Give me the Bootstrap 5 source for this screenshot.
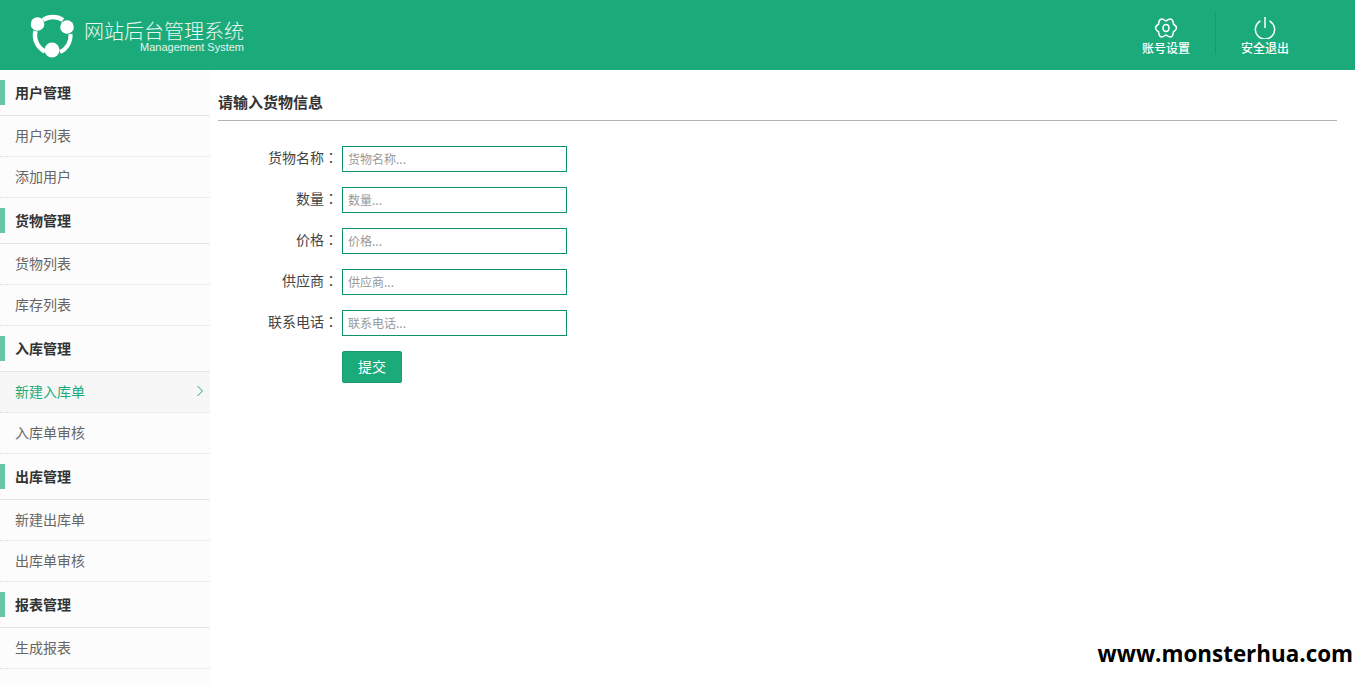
<!DOCTYPE html>
<html lang="zh-CN">
<head>
<meta charset="utf-8">
<title>网站后台管理系统</title>
<link href="https://cdn.jsdelivr.net/npm/bootstrap@5.3.0/dist/css/bootstrap.min.css" rel="stylesheet">
<style>
html,body{height:685px;overflow:hidden}
body{font-family:"Noto Sans CJK SC",sans-serif;font-size:14px;color:#333;background:#fff;position:relative}
.top-bar{height:70px;background:#1bab7a;color:#fff}
.brand-wrap{padding-left:30px}
.brand-text{margin-left:8px;width:160px;padding-top:4px}
.brand-title{font-family:"Liberation Sans","Noto Sans CJK SC",sans-serif;font-size:20px;line-height:22px;color:#e9f7f2;font-weight:300}
.brand-sub{font-family:"Liberation Sans",sans-serif;font-size:11px;line-height:13px;text-align:right;color:#e3f5ef;margin-top:-2px}
.top-right{padding:12px 41px 0 0}
.top-act{width:98px;margin-top:4px;font-size:12px;line-height:16px;font-weight:500;color:#fff}
.act-ico{height:24px}
.top-sep{width:1px;height:42px;background:#179a6d}
.side{width:210px;height:615px;background:#fcfcfc;flex:none;overflow:hidden}
.side-head{height:46px;border-bottom:1px solid #e6e6e6;padding-left:15px;font-weight:700;font-size:14px;color:#333;position:relative;display:flex;align-items:center}
.side-head::before{content:"";position:absolute;left:0;top:10px;width:5px;height:25px;background:#66c5a4}
.side-link{height:41px;border-bottom:1px dotted #ddd;padding:0 0 2px 15px;font-size:14px;color:#666;display:flex;align-items:center;justify-content:space-between;text-decoration:none}
.side-link.on{color:#1bab7a;background:#f7f7f7;padding-right:6px}
.main-area{padding:18px 18px 0 8px}
.page-ttl{font-size:15px;font-weight:700;color:#333;height:33px;line-height:28px;border-bottom:1px solid #b3b3b3;margin-bottom:25px}
.form-line{height:26px;margin-bottom:15px}
.form-lbl{width:124px;text-align:right;font-size:14px;color:#444;line-height:22px;padding:0 4px 4px 0}
.lbl-colon{display:inline-block;width:14px;text-align:center;font-family:"Noto Sans CJK TC",sans-serif}
.form-inp{width:225px;height:26px;border:1px solid #0e9268;border-radius:0;padding:0 5px 2px;font-size:12px;color:#333;background:#fff;outline:0}
.form-inp::placeholder{color:#999;opacity:1}
.btn-send{width:60px;height:32px;margin-left:124px;background:#1bab7a;border:1px solid #189b6e;border-radius:2px;color:#fff;font-size:14px;padding:0 0 2px;line-height:28px}
.mark-web{position:absolute;right:2px;bottom:15px;font-family:"Open Sans",sans-serif;font-weight:700;font-size:22.4px;line-height:32px;color:#000}
</style>
</head>
<body>
<header class="top-bar d-flex align-items-center justify-content-between">
  <div class="brand-wrap d-flex align-items-center">
    <svg width="46" height="46" viewBox="0 0 46 46" aria-hidden="true">
      <path d="M5.500 19A18 18 0 0 0 15 39.500" fill="none" stroke="#fff" stroke-width="4.500"/>
      <path d="M13 8A18 18 0 0 1 33 8" fill="none" stroke="#fff" stroke-width="4.500"/>
      <path d="M40.500 22A18 18 0 0 1 30 40" fill="none" stroke="#fff" stroke-width="4"/>
      <circle cx="7.500" cy="12" r="6.800" fill="#fff"/>
      <circle cx="37" cy="15" r="6.800" fill="#fff"/>
      <circle cx="22" cy="38" r="7.500" fill="#fff"/>
    </svg>
    <div class="brand-text">
      <div class="brand-title text-nowrap">网站后台管理系统</div>
      <div class="brand-sub">Management System</div>
    </div>
  </div>
  <div class="top-right d-flex align-self-start">
    <div class="top-act d-flex flex-column align-items-center">
      <div class="act-ico d-flex align-items-center">
        <svg width="24" height="20" viewBox="0 0 24 20" fill="none" stroke="#fff" stroke-width="1.500" aria-hidden="true">
          <path d="M12 3Q18.750-2 19.400 6Q25.500 10 19.400 14Q18.750 22 12 17Q5.250 22 4.600 14Q-1.500 10 4.600 6Q5.250-2 12 3Z"/>
          <ellipse cx="12" cy="10" rx="3" ry="3.400"/>
        </svg>
      </div>
      账号设置
    </div>
    <div class="top-sep"></div>
    <div class="top-act d-flex flex-column align-items-center">
      <div class="act-ico d-flex align-items-center">
        <svg width="22" height="22" viewBox="0 0 22 22" fill="none" stroke="#fff" stroke-width="1.500" aria-hidden="true">
          <path d="M6.500 4A9.600 9.600 0 1 0 15.500 4"/><path d="M11 0v11"/>
        </svg>
      </div>
      安全退出
    </div>
  </div>
</header>
<div class="d-flex">
  <nav class="side">
    <div class="side-head">用户管理</div>
    <a class="side-link" href="#">用户列表</a>
    <a class="side-link" href="#">添加用户</a>
    <div class="side-head">货物管理</div>
    <a class="side-link" href="#">货物列表</a>
    <a class="side-link" href="#">库存列表</a>
    <div class="side-head">入库管理</div>
    <a class="side-link on" href="#">新建入库单
      <svg width="8" height="12" viewBox="0 0 8 12" fill="none" stroke="#1bab7a" stroke-width="1" aria-hidden="true"><path d="M1.500 1l5 5-5 5"/></svg>
    </a>
    <a class="side-link" href="#">入库单审核</a>
    <div class="side-head">出库管理</div>
    <a class="side-link" href="#">新建出库单</a>
    <a class="side-link" href="#">出库单审核</a>
    <div class="side-head">报表管理</div>
    <a class="side-link" href="#">生成报表</a>
  </nav>
  <main class="main-area flex-grow-1">
    <div class="page-ttl">请输入货物信息</div>
    <form>
      <div class="form-line d-flex align-items-center"><label class="form-lbl">货物名称<span class="lbl-colon">：</span></label><input class="form-inp" placeholder="货物名称..."></div>
      <div class="form-line d-flex align-items-center"><label class="form-lbl">数量<span class="lbl-colon">：</span></label><input class="form-inp" placeholder="数量..."></div>
      <div class="form-line d-flex align-items-center"><label class="form-lbl">价格<span class="lbl-colon">：</span></label><input class="form-inp" placeholder="价格..."></div>
      <div class="form-line d-flex align-items-center"><label class="form-lbl">供应商<span class="lbl-colon">：</span></label><input class="form-inp" placeholder="供应商..."></div>
      <div class="form-line d-flex align-items-center"><label class="form-lbl">联系电话<span class="lbl-colon">：</span></label><input class="form-inp" placeholder="联系电话..."></div>
      <button type="button" class="btn btn-send">提交</button>
    </form>
  </main>
</div>
<div class="mark-web">www.monsterhua.com</div>
<script src="https://cdn.jsdelivr.net/npm/bootstrap@5.3.0/dist/js/bootstrap.bundle.min.js"></script>
</body>
</html>
